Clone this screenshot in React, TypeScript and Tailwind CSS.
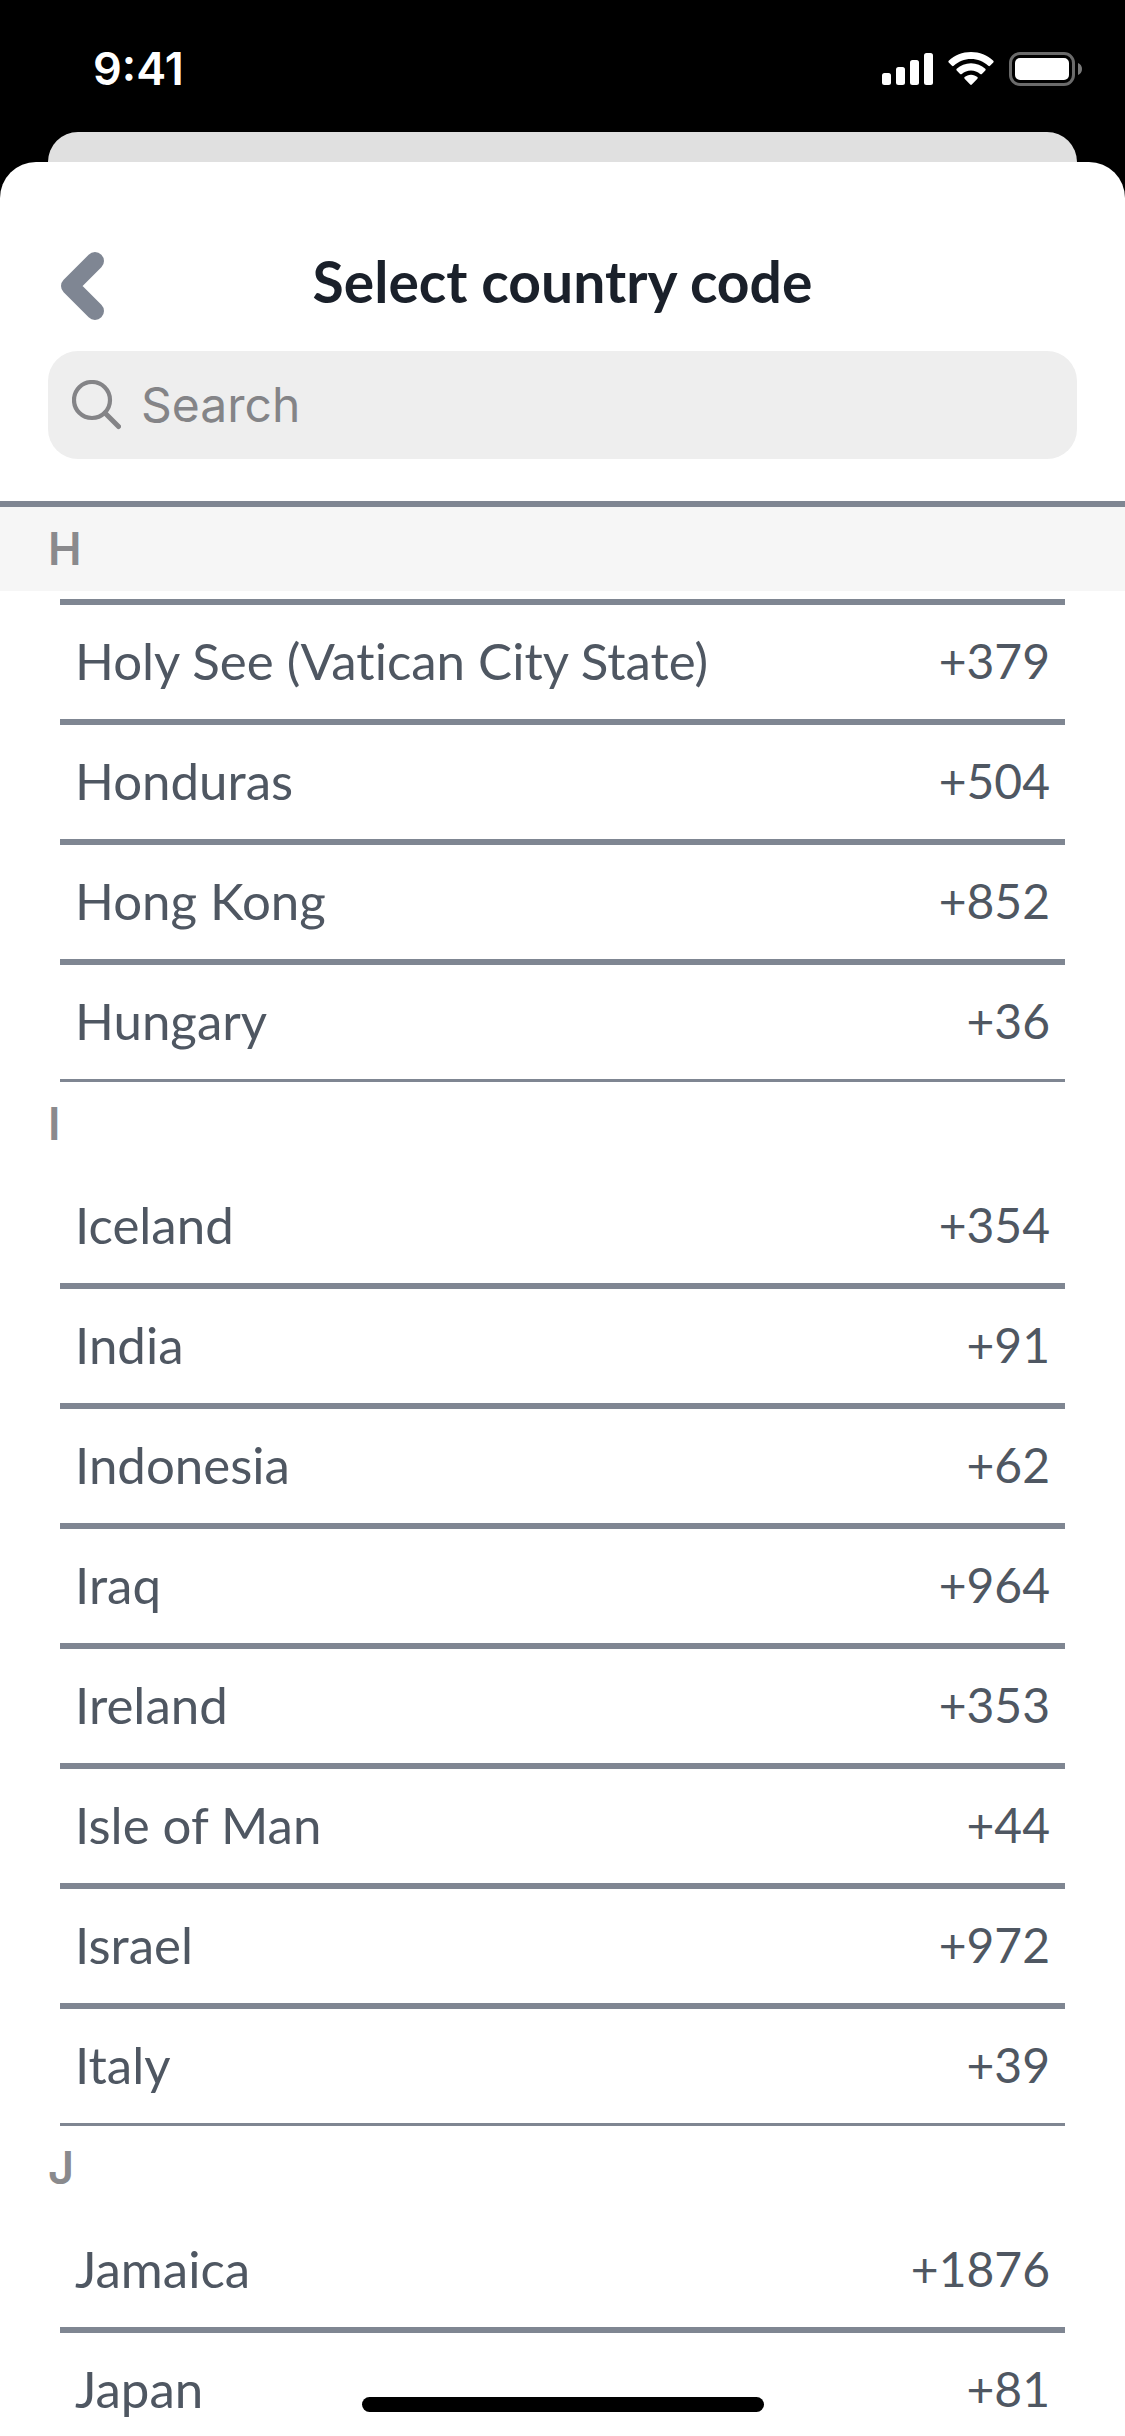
import React, { useState } from 'react';
import clsx from 'clsx';

interface Country {
  name: string;
  code: string;
}

interface Section {
  letter: string;
  countries: Country[];
}

const sections: Section[] = [
  {
    letter: 'H',
    countries: [
      { name: 'Holy See (Vatican City State)', code: '+379' },
      { name: 'Honduras', code: '+504' },
      { name: 'Hong Kong', code: '+852' },
      { name: 'Hungary', code: '+36' },
    ],
  },
  {
    letter: 'I',
    countries: [
      { name: 'Iceland', code: '+354' },
      { name: 'India', code: '+91' },
      { name: 'Indonesia', code: '+62' },
      { name: 'Iraq', code: '+964' },
      { name: 'Ireland', code: '+353' },
      { name: 'Isle of Man', code: '+44' },
      { name: 'Israel', code: '+972' },
      { name: 'Italy', code: '+39' },
    ],
  },
  {
    letter: 'J',
    countries: [
      { name: 'Jamaica', code: '+1876' },
      { name: 'Japan', code: '+81' },
    ],
  },
];

const StatusBar: React.FC = () => (
  <div className="flex h-[132px] shrink-0 items-center justify-between pt-1.5 pr-[42px] pl-[93px] text-white">
    <span className="font-['Inter',sans-serif] text-[45px] leading-[54px] font-semibold">9:41</span>
    <div className="flex items-center gap-[15px]">
      {/* Signal */}
      <svg width="51" height="34" viewBox="0 0 51 34" fill="currentColor">
        <rect x="0" y="21" width="9" height="12" rx="2.5" />
        <rect x="14" y="15" width="9" height="18" rx="2.5" />
        <rect x="28" y="8" width="9" height="25" rx="2.5" />
        <rect x="42" y="1" width="9" height="32" rx="2.5" />
      </svg>
      {/* Wifi */}
      <svg width="46" height="34" viewBox="0 0 46 34" fill="currentColor">
        <path d="M23 0C14.4 0 6.6 3.3.7 8.7c-.5.5-.5 1.200 0 1.700l3.300 3.400c.5.5 1.200.5 1.700 0C10.300 9.600 16.300 7.100 23 7.100s12.700 2.500 17.300 6.700c.5.5 1.200.5 1.700 0l3.300-3.400c.5-.5.5-1.200 0-1.700C39.400 3.300 31.600 0 23 0z" />
        <path d="M23 11.300c-5.500 0-10.500 2.100-14.300 5.500-.5.5-.5 1.200 0 1.700l3.400 3.400c.5.5 1.200.5 1.700 0 2.500-2.200 5.700-3.500 9.200-3.500s6.700 1.300 9.200 3.500c.5.5 1.200.5 1.700 0l3.400-3.400c.5-.5.5-1.200 0-1.700-3.800-3.400-8.800-5.500-14.300-5.500z" />
        <path d="M23 22.700c-2.500 0-4.700.9-6.400 2.400-.5.5-.5 1.100 0 1.600l5.600 5.900c.5.500 1.100.500 1.600 0l5.600-5.900c.5-.5.5-1.100 0-1.600-1.700-1.500-3.900-2.400-6.400-2.400z" />
      </svg>
      {/* Battery */}
      <svg width="74" height="34" viewBox="0 0 74 34" fill="none">
        <rect x="1.500" y="1.500" width="63" height="31" rx="9.500" stroke="#6b6b6b" strokeWidth="3" />
        <rect x="6" y="6" width="54" height="22" rx="5" fill="currentColor" />
        <path d="M69 11c2.500 1 4 3.300 4 6s-1.500 5-4 6z" fill="#7a7a7a" />
      </svg>
    </div>
  </div>
);

const CountryRow: React.FC<{ country: Country; pinned: boolean }> = ({ country, pinned }) => (
  <li
    className={clsx(
      'border-y-[3px] border-[#7f8692]',
      !pinned && 'first:border-t-transparent'
    )}
  >
    <button type="button" className="flex h-[114px] w-full items-center justify-between px-[15px] pb-[3px] text-left">
      <span className="text-[51px] [font-variant-ligatures:no-common-ligatures]">{country.name}</span>
      <span className="text-[48px]">{country.code}</span>
    </button>
  </li>
);

export default function App() {
  const [query, setQuery] = useState('');

  const visible = sections
    .map((section) => ({
      ...section,
      countries: section.countries.filter((c) => c.name.toLowerCase().includes(query.toLowerCase())),
    }))
    .filter((section) => section.countries.length > 0);

  return (
    <div className="relative flex h-screen flex-col overflow-hidden bg-black font-['Lato',sans-serif]">
      <StatusBar />

      {/* Edge of the screen behind the sheet */}
      <div className="mx-12 h-[30px] shrink-0 rounded-t-[30px] bg-[#e0e0e0]" />

      <main className="flex min-h-0 flex-1 flex-col rounded-t-[36px] bg-white">
        <header className="grid grid-cols-[1fr_auto_1fr] items-center px-12 pt-[83px]">
          <button type="button" aria-label="Back" className="w-fit px-3">
            <svg width="46" height="72" viewBox="0 0 46 72" fill="none" stroke="#7f8693" strokeWidth="18" strokeLinecap="round" strokeLinejoin="round">
              <path d="M35 12 10 37l25 25" />
            </svg>
          </button>
          <h1 className="pb-2 text-[57px] leading-[72px] font-bold text-[#1a202a]">Select country code</h1>
        </header>

        <label className="mx-12 mt-[26px] flex h-[108px] shrink-0 items-center gap-5 rounded-[30px] bg-[#eeeeee] px-6">
          <svg width="49" height="50" viewBox="0 0 49 50" fill="none" stroke="#848487" strokeWidth="4.200" strokeLinecap="round">
            <circle cx="20" cy="20" r="18" />
            <path d="M33 33 46.500 46.500" strokeWidth="5" />
          </svg>
          <input
            type="search"
            aria-label="Search"
            placeholder="Search"
            value={query}
            onChange={(e) => setQuery(e.target.value)}
            className="min-w-0 flex-1 bg-transparent font-['Inter',sans-serif] text-[48px] leading-[60px] text-[#1a202a] outline-none placeholder:text-[#848487]"
          />
        </label>

        <div className="mt-[42px] min-h-0 flex-1 overflow-hidden border-t-[6px] border-[#7f8692]">
          {visible.map((section, index) => {
            const pinned = index === 0;
            return (
              <section key={section.letter}>
                <h2
                  className={clsx(
                    "flex h-[84px] items-center px-12 font-['Inter',sans-serif] text-[45px] leading-[54px] font-semibold text-[#8a8a8d]",
                    pinned && 'bg-[#f6f6f6]'
                  )}
                >
                  {section.letter}
                </h2>
                <ul
                  className={clsx(
                    'mx-[60px] leading-[60px] text-[#4f5762]',
                    pinned && 'mt-2 border-t-[3px] border-[#7f8692]'
                  )}
                >
                  {section.countries.map((country) => (
                    <CountryRow key={country.name} country={country} pinned={pinned} />
                  ))}
                </ul>
              </section>
            );
          })}
        </div>
      </main>

      {/* Home indicator */}
      <div className="absolute bottom-6 left-1/2 h-[15px] w-[402px] -translate-x-1/2 rounded-full bg-black" />
    </div>
  );
}
